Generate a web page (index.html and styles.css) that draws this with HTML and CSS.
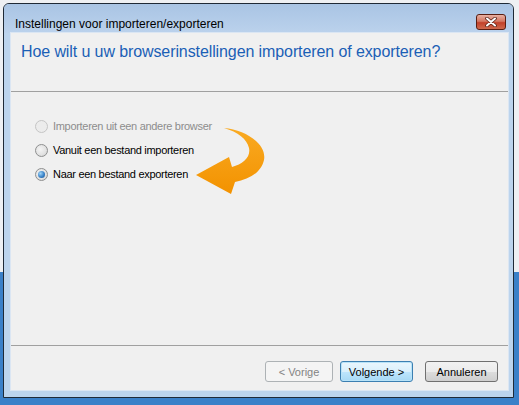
FILE: index.html
```html
<!DOCTYPE html>
<html lang="nl">
<head>
    <meta charset="UTF-8">
    <title>Instellingen voor importeren/exporteren</title>
    <link rel="stylesheet" href="styles.css">
</head>
<body>
    <div class="window">
        <div class="titlebar">
            <span class="title">Instellingen voor importeren/exporteren</span>
            <div class="close">
                <svg width="14" height="10" viewBox="0 0 14 10">
                    <path d="M3 1.5 L11 8.5 M11 1.5 L3 8.5" stroke="#5a2318" stroke-width="3.6" stroke-linecap="round"/>
                    <path d="M3 1.5 L11 8.5 M11 1.5 L3 8.5" stroke="#fff" stroke-width="2" stroke-linecap="round"/>
                </svg>
            </div>
        </div>
        <div class="client">
            <div class="header">
                <h1>Hoe wilt u uw browserinstellingen importeren of exporteren?</h1>
            </div>
            <div class="content">
                <ul class="options">
                    <li class="disabled"><span class="radio"></span>Importeren uit een andere browser</li>
                    <li><span class="radio"></span>Vanuit een bestand importeren</li>
                    <li><span class="radio checked"></span>Naar een bestand exporteren</li>
                </ul>
                <svg class="arrow" width="80" height="75" viewBox="190 124 80 75">
                    <defs>
                        <linearGradient id="oranje" x1="0" y1="0" x2="0" y2="1">
                            <stop offset="0" stop-color="#f9aa22"/>
                            <stop offset="1" stop-color="#f39200"/>
                        </linearGradient>
                    </defs>
                    <path d="M224 128 C246 130 267 144 264 160 C261 173 249 179 235 182 L231 194 L196 175 L229 157 L232 167 C243 164 251 157 249 148 C247 139 238 132 224 128 Z" fill="url(#oranje)"/>
                </svg>
            </div>
            <div class="footer">
                <button class="btn" disabled>&lt; Vorige</button>
                <button class="btn default">Volgende &gt;</button>
                <button class="btn cancel">Annuleren</button>
            </div>
        </div>
    </div>
</body>
</html>
```

FILE: styles.css
```css
body {
    margin: 0;
    padding: 3px 0 0 3px;
    height: 402px;
    overflow: hidden;
    font-family: "Liberation Sans", Arial, sans-serif;
    background: linear-gradient(to bottom, #eef0f3 0, #eef0f3 272px, #3a80c8 272px, #3a80c8 100%);
}

.window {
    width: 509px;
    border: 1px solid #1f2a36;
    border-radius: 6px 6px 0 0;
    background-color: #bcd4ed;
}

.titlebar {
    height: 29px;
    display: flex;
    justify-content: space-between;
    border-radius: 5px 5px 0 0;
    background: linear-gradient(to bottom, #a9c4e4, #bbd2ec);
}

.title {
    font-size: 12px;
    color: #000;
    padding: 13px 0 0 11px;
}

.close {
    width: 28px;
    height: 14px;
    margin: 10px 7px 0 0;
    border: 1px solid #5a1e12;
    border-radius: 3px;
    background: linear-gradient(to bottom, #e8b0a2 0, #d47762 45%, #c2412a 55%, #cf6a4e 100%);
    display: flex;
    align-items: center;
    justify-content: center;
}

.client {
    margin: 0 5px 7px 7px;
    background-color: #f0f0f0;
    box-shadow: 0 0 0 1px #dbe6f3;
}

.header {
    height: 58px;
    border-bottom: 1px solid #a0a0a0;
}

h1 {
    margin: 0;
    padding: 10px 0 0 10px;
    font-size: 16px;
    letter-spacing: -0.1px;
    font-weight: normal;
    color: #1b5fb6;
}

.content {
    position: relative;
    height: 253px;
}

.options {
    list-style: none;
    margin: 0;
    padding: 22px 0 0 24px;
}

.options li {
    height: 24px;
    display: flex;
    align-items: center;
    font-size: 11px;
    letter-spacing: -0.3px;
    color: #000;
}

.options li.disabled {
    color: #8d8d8d;
}

.radio {
    width: 11px;
    height: 11px;
    border: 1px solid #8e8f8f;
    border-radius: 50%;
    margin-right: 5px;
    background: radial-gradient(circle at 40% 40%, #f4f4f4 0, #e3e3e3 55%, #cfcfcf 100%);
    position: relative;
}

.disabled .radio {
    border-color: #c5c5c5;
    background: #ececec;
}

.radio.checked::after {
    content: "";
    position: absolute;
    left: 2px;
    top: 2px;
    width: 7px;
    height: 7px;
    border-radius: 50%;
    background: radial-gradient(circle at 35% 35%, #9fd4f7 0, #3a83c8 55%, #1a4f8c 100%);
}

.arrow {
    position: absolute;
    left: 179px;
    top: 32px;
}

.footer {
    border-top: 1px solid #a0a0a0;
    padding: 15px 10px 8px 0;
    display: flex;
    justify-content: flex-end;
}

.btn {
    height: 21px;
    width: 73px;
    margin-left: 7px;
    padding: 0;
    font-family: "Liberation Sans", Arial, sans-serif;
    font-size: 11px;
    color: #000;
    border: 1px solid #707070;
    border-radius: 3px;
    background: linear-gradient(to bottom, #f2f2f2 0, #ebebeb 50%, #dddddd 51%, #cfcfcf 100%);
}

.btn:disabled {
    width: 68px;
    color: #838383;
    border-color: #adb2b5;
    background: #f4f4f4;
}

.btn.default {
    border-color: #3c7fb1;
    box-shadow: inset 0 0 0 1px #b8e3f8;
    background: linear-gradient(to bottom, #eaf6fd 0, #d9f0fc 50%, #bee6fd 51%, #a7d9f5 100%);
}

.btn.cancel {
    margin-left: 12px;
}
```
